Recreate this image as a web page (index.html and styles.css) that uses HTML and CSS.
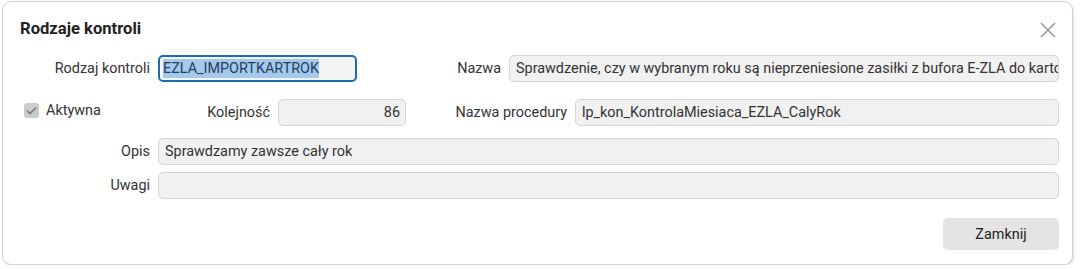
FILE: index.html
```html
<!DOCTYPE html>
<html lang="pl">
<head>
  <meta charset="UTF-8">
  <title>Rodzaje kontroli</title>
  <link rel="stylesheet" href="styles.css">
</head>
<body>

  <div class="dialog">
    <div class="dialog-head">
      <h1>Rodzaje kontroli</h1>
      <span class="close">
        <svg width="16" height="16" viewBox="0 0 16 16"><path d="M1 1L15 15M15 1L1 15" stroke="#9a9a9a" stroke-width="1.6" fill="none"/></svg>
      </span>
    </div>

    <!-- wiersz 1 -->
    <div class="row row-1">
      <label class="lbl w-130">Rodzaj kontroli</label>
      <div class="field focused w-199"><span class="sel">EZLA_IMPORTKARTROK</span></div>
      <label class="lbl w-145">Nazwa</label>
      <div class="field grow">Sprawdzenie, czy w wybranym roku są nieprzeniesione zasiłki z bufora E-ZLA do kartoteki</div>
    </div>

    <!-- wiersz 2 -->
    <div class="row row-2">
      <div class="cell-check">
        <span class="check"><svg width="11" height="9" viewBox="0 0 11 9"><path d="M1 4.5L4 7.5L10 1.5" stroke="#7a7a7a" stroke-width="1.6" fill="none"/></svg></span>
        <span class="check-lbl">Aktywna</span>
        <label class="lbl push">Kolejność</label>
      </div>
      <div class="field num w-128">86</div>
      <label class="lbl w-162">Nazwa procedury</label>
      <div class="field grow">lp_kon_KontrolaMiesiaca_EZLA_CalyRok</div>
    </div>

    <!-- wiersz 3 -->
    <div class="row row-3">
      <label class="lbl w-130">Opis</label>
      <div class="field grow">Sprawdzamy zawsze cały rok</div>
    </div>

    <!-- wiersz 4 -->
    <div class="row row-4">
      <label class="lbl w-130">Uwagi</label>
      <div class="field grow"></div>
    </div>

    <div class="footer">
      <button class="btn">Zamknij</button>
    </div>
  </div>

</body>
</html>
```

FILE: styles.css
```css
/* ogólne */
* {
  box-sizing: border-box;
}
body {
  margin: 0;
  background: #fff;
  font-family: 'Roboto', 'Liberation Sans', sans-serif;
  color: #333;
  font-size: 14.4px;
}
.dialog {
  margin: 1px 7px 0 2px;
  height: 264px;
  border: 1px solid #d2d2d2;
  border-radius: 9px;
  background: #fff;
  box-shadow: 1px 1px 2px rgba(0,0,0,0.12);
  padding: 17px 13px 0 17px;
}
.dialog-head {
  display: flex;
  justify-content: space-between;
  align-items: center;
  height: 20px;
}
.dialog-head h1 {
  margin: 0;
  font-size: 16.6px;
  font-weight: bold;
  color: #222;
  line-height: 20px;
}
.close {
  display: flex;
  margin-right: 3px;
  margin-top: 2px;
}
/* wiersze */
.row {
  display: flex;
  align-items: center;
}
.row-1 { margin-top: 16px; }
.row-2 { margin-top: 17px; }
.row-3 { margin-top: 12px; }
.row-4 { margin-top: 7px; }
.lbl {
  text-align: right;
  padding-right: 8px;
  white-space: nowrap;
}
.w-130 { width: 138px; }
.w-145 { width: 152px; }
.w-162 { width: 169px; }
.w-199 { width: 199px; }
.w-128 { width: 128px; }
.field {
  height: 27px;
  line-height: 25px;
  background: #f1f1f1;
  border: 1px solid #d4d4d4;
  border-radius: 5px;
  padding: 0 6px;
  white-space: nowrap;
  overflow: hidden;
  color: #333;
}
.grow {
  flex: 1;
  min-width: 0;
}
.num {
  text-align: right;
  padding-right: 5px;
}
.focused {
  border: 2px solid #1b6ea8;
  padding: 0 3px;
  line-height: 23px;
  background: #f4f4f4;
}
.sel {
  background: #a6c8ea;
  color: #1c3f66;
  padding: 1px 0;
}
/* checkbox */
.cell-check {
  display: flex;
  align-items: center;
  width: 258px;
  padding-left: 4px;
}
.check {
  width: 15px;
  height: 15px;
  background: #cbcbcb;
  border-radius: 3px;
  display: flex;
  align-items: center;
  justify-content: center;
  margin-top: -4px;
}
.check-lbl {
  margin-left: 7px;
  margin-top: -4px;
}
.push {
  margin-left: auto;
}
/* stopka */
.footer {
  display: flex;
  justify-content: flex-end;
  margin-top: 19px;
}
.btn {
  width: 116px;
  height: 32px;
  background: #e4e4e4;
  border: none;
  border-radius: 5px;
  font-family: inherit;
  font-size: 14.4px;
  color: #222;
}
```
